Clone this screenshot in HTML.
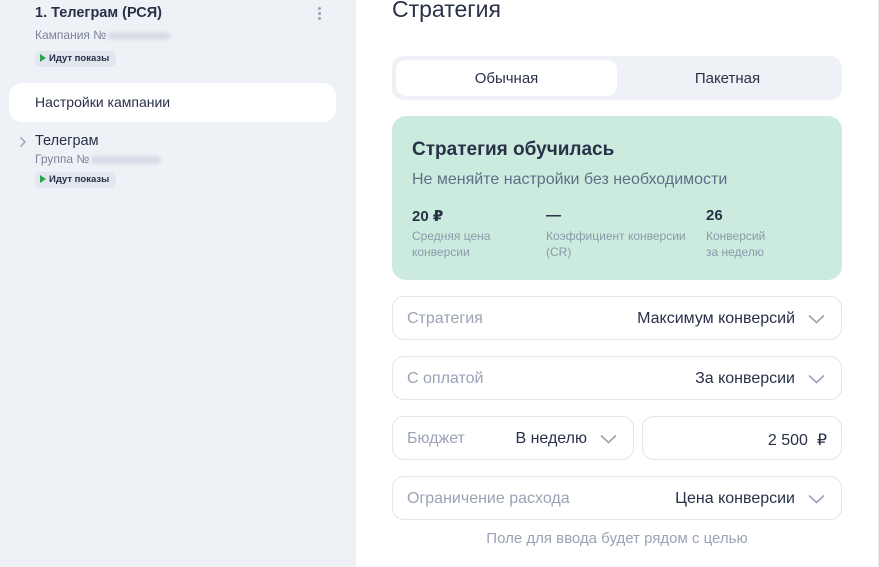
<!DOCTYPE html>
<html><head><meta charset="utf-8"><style>
*{box-sizing:border-box;margin:0;padding:0}
body{width:879px;height:567px;overflow:hidden;background:#fff;font-family:"Liberation Sans","DejaVu Sans",sans-serif;color:#283148;position:relative}
.side{position:absolute;left:0;top:0;width:356px;height:567px;background:#eef1f6}
.abs{position:absolute;white-space:nowrap}
.badge{position:absolute;height:16px;width:81px;background:#e1e6ef;border-radius:5px;font-size:9.5px;font-weight:bold;color:#283148;padding:0 0 0 5px;line-height:16px}
.badge i{display:inline-block;width:0;height:0;border-left:6px solid #2ea44f;border-top:4px solid transparent;border-bottom:4px solid transparent;margin-right:3px;vertical-align:-1px}
.blur{display:inline-block;width:62px;height:8px;background:#d7dce6;border-radius:4px;filter:blur(1.5px);vertical-align:middle;margin-left:2px}
.field{position:absolute;border:1px solid #e2e5ee;border-radius:12px;height:44px;background:#fff}
.field .l{position:absolute;left:14px;top:13px;font-size:16px;color:#9aa2b6}
.field .v{position:absolute;right:46px;top:13px;font-size:16px;color:#283148}
.chev{position:absolute;right:16px;top:17px;width:17px;height:10px}
</style></head><body>
<div class="side">
<div class="abs" style="left:35px;top:5px;font-size:14.5px;font-weight:bold;color:#283148">1. Телеграм (РСЯ)</div>
<div class="abs" style="left:318px;top:7px;width:4px"><div style="width:3px;height:3px;border-radius:2px;background:#9aa2b6;margin-bottom:2px"></div><div style="width:3px;height:3px;border-radius:2px;background:#9aa2b6;margin-bottom:2px"></div><div style="width:3px;height:3px;border-radius:2px;background:#9aa2b6"></div></div>
<div class="abs" style="left:35px;top:28px;font-size:12px;color:#7a839a">Кампания №<span class="blur"></span></div>
<div class="badge" style="left:35px;top:51px"><i></i>Идут показы</div>
<div class="abs" style="left:9px;top:83px;width:327px;height:39px;background:#fff;border-radius:13px"></div>
<div class="abs" style="left:35px;top:94px;font-size:14px;color:#283148">Настройки кампании</div>
<svg class="abs" style="left:19px;top:136px" width="8" height="12"><path d="M1.5 1.5l4.5 4.5-4.5 4.5" fill="none" stroke="#9aa2b6" stroke-width="1.4"/></svg>
<div class="abs" style="left:35px;top:133px;font-size:14.5px;color:#283148">Телеграм</div>
<div class="abs" style="left:35px;top:152px;font-size:12px;color:#7a839a">Группа №<span class="blur" style="width:70px"></span></div>
<div class="badge" style="left:35px;top:172px"><i></i>Идут показы</div>
</div>
<div class="abs" style="left:878px;top:0;width:1px;height:567px;background:#e6e9f0"></div>
<div class="abs" style="left:392px;top:-4px;font-size:23px;color:#283148;font-weight:500">Стратегия</div>
<div class="abs" style="left:392px;top:56px;width:450px;height:44px;background:#eef1f6;border-radius:12px"></div>
<div class="abs" style="left:396px;top:60px;width:221px;height:36px;background:#fff;border-radius:10px"></div>
<div class="abs" style="left:396px;top:70px;width:221px;text-align:center;font-size:15px">Обычная</div>
<div class="abs" style="left:617px;top:70px;width:221px;text-align:center;font-size:15px">Пакетная</div>
<div class="abs" style="left:392px;top:116px;width:450px;height:164px;background:#cbebdf;border-radius:14px"></div>
<div class="abs" style="left:412px;top:139px;font-size:19px;font-weight:bold;color:#283148">Стратегия обучилась</div>
<div class="abs" style="left:412px;top:171px;font-size:16px;color:#5e6f86">Не меняйте настройки без необходимости</div>
<div class="abs" style="left:412px;top:207px;font-size:15px;font-weight:bold">20 ₽</div>
<div class="abs" style="left:546px;top:207px;font-size:15px;font-weight:bold">—</div>
<div class="abs" style="left:706px;top:207px;font-size:15px;font-weight:bold">26</div>
<div class="abs" style="left:412px;top:228px;font-size:12px;line-height:16px;color:#8a9aaa">Средняя цена<br>конверсии</div>
<div class="abs" style="left:546px;top:228px;font-size:12px;line-height:16px;color:#8a9aaa">Коэффициент конверсии<br>(CR)</div>
<div class="abs" style="left:706px;top:228px;font-size:12px;line-height:16px;color:#8a9aaa">Конверсий<br>за неделю</div>
<div class="field" style="left:392px;top:296px;width:450px"><span class="l">Стратегия</span><span class="v">Максимум конверсий</span><svg class="chev" viewBox="0 0 17 10"><path d="M1 1.5l7.5 7 7.5-7" fill="none" stroke="#9aa2b6" stroke-width="1.6"/></svg></div>
<div class="field" style="left:392px;top:356px;width:450px"><span class="l">С оплатой</span><span class="v">За конверсии</span><svg class="chev" viewBox="0 0 17 10"><path d="M1 1.5l7.5 7 7.5-7" fill="none" stroke="#9aa2b6" stroke-width="1.6"/></svg></div>
<div class="field" style="left:392px;top:416px;width:242px"><span class="l">Бюджет</span><span class="v">В неделю</span><svg class="chev" viewBox="0 0 17 10"><path d="M1 1.5l7.5 7 7.5-7" fill="none" stroke="#9aa2b6" stroke-width="1.6"/></svg></div>
<div class="field" style="left:642px;top:416px;width:200px"><span class="v" style="right:14px">2 500&nbsp; ₽</span></div>
<div class="field" style="left:392px;top:476px;width:450px"><span class="l">Ограничение расхода</span><span class="v">Цена конверсии</span><svg class="chev" viewBox="0 0 17 10"><path d="M1 1.5l7.5 7 7.5-7" fill="none" stroke="#9aa2b6" stroke-width="1.6"/></svg></div>
<div class="abs" style="left:392px;top:530px;width:450px;text-align:center;font-size:15px;color:#9aa2b6">Поле для ввода будет рядом с целью</div>
</body></html>
